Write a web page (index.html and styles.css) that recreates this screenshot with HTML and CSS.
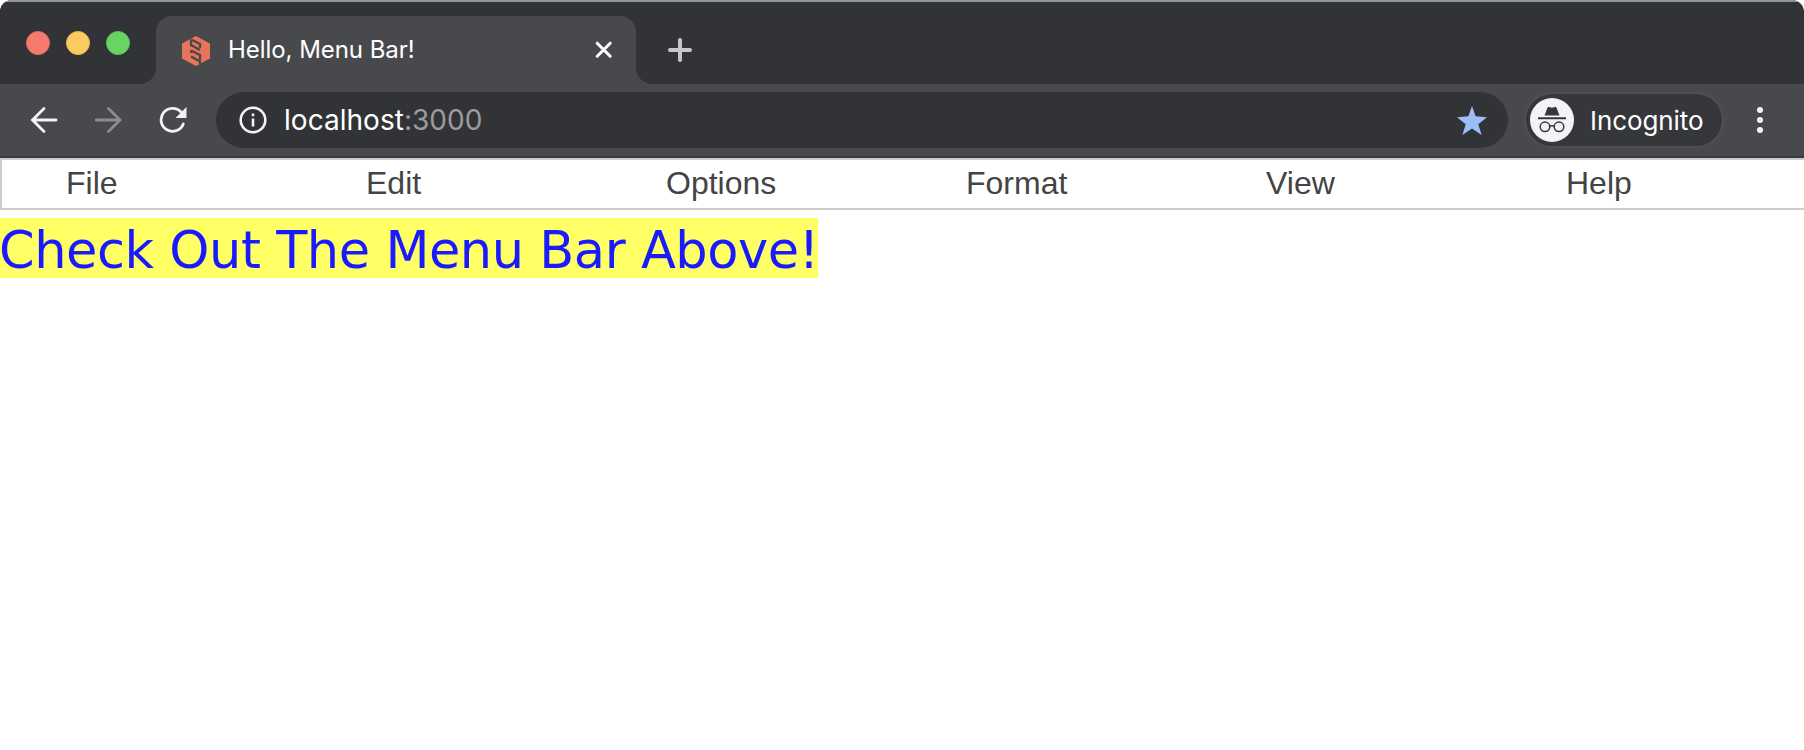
FILE: index.html
```html
<!DOCTYPE html>
<html lang="en">
<head>
<meta charset="utf-8">
<title>Hello, Menu Bar!</title>
<link rel="stylesheet" href="styles.css">
</head>
<body>
<div class="window">
  <header class="tabstrip">
    <div class="lights"><i class="light red"></i><i class="light yellow"></i><i class="light green"></i></div>
    <div class="tab">
      <svg class="favicon" width="28" height="30" viewBox="0 0 28 30">
        <path fill="#e8745b" d="M14 0 28 7.500V22.500L14 30 0 22.500V7.500Z"/>
        <path class="slots" d="M9 3.500 18 8V12M9 3.500V9L18 14M9 14.500 18 19V24M9 14.500V17M9 20.500 18 25.500V28"/>
      </svg>
      <span class="tab-title">Hello, Menu Bar!</span>
      <svg class="close" width="18" height="18" viewBox="0 0 18 18"><path d="M2.200 2.200 15.200 15.200M15.200 2.200 2.200 15.200"/></svg>
    </div>
    <svg class="plus" width="24" height="24" viewBox="0 0 24 24"><path d="M12 2V22M2 12H22"/></svg>
  </header>
  <nav class="toolbar">
    <svg class="nav back" width="28" height="28" viewBox="0 0 28 28"><path d="M26 14H3M14 2.500 2.500 14 14 25.500"/></svg>
    <svg class="nav forward" width="28" height="28" viewBox="0 0 28 28"><path d="M1 14H25M13.500 2.500 25 14 13.500 25.500"/></svg>
    <svg class="nav reload" width="28" height="28" viewBox="0 0 28 28"><path d="M24.300 18A11.500 11.500 0 1 1 22 6"/><path class="solid" d="M27.500 1V12H16.500Z"/></svg>
    <div class="address">
      <svg class="info" width="28" height="28" viewBox="0 0 28 28"><circle cx="14" cy="14" r="12.300"/><path d="M14 12.500V20.500M14 7.500V10.300"/></svg>
      <span class="url"><span class="host">localhost</span><span class="port">:3000</span></span>
      <svg class="star" width="30" height="29" viewBox="0 0 30 29"><path d="M15 0 18.600 10.300 30 11.200 21.300 18.200 24.600 29 15 22.600 5.400 29 8.700 18.200 0 11.200 11.400 10.300Z"/></svg>
    </div>
    <div class="chip">
      <svg class="avatar" width="44" height="44" viewBox="0 0 44 44">
        <circle cx="22" cy="22" r="22" fill="#f1f3f4"/>
        <path fill="#36373b" d="M14.500 17.500 17.600 9.500Q18 8.600 19 8.900L22 9.700 25 8.900Q26 8.600 26.400 9.500L29.500 17.500ZM8 19.200H36V21.200H8Z"/>
        <g fill="none" stroke="#36373b" stroke-width="1.500"><circle cx="15" cy="28.800" r="4.800"/><circle cx="29" cy="28.800" r="4.800"/><path d="M19.700 28.500Q22 27 24.300 28.500"/></g>
      </svg>
      <span class="chip-label">Incognito</span>
    </div>
    <svg class="more" width="6" height="26" viewBox="0 0 6 26"><circle cx="3" cy="3" r="3"/><circle cx="3" cy="13" r="3"/><circle cx="3" cy="23" r="3"/></svg>
  </nav>
  <main class="page">
    <ul class="menubar"><li>File</li><li>Edit</li><li>Options</li><li>Format</li><li>View</li><li>Help</li></ul>
    <div class="banner">Check Out The Menu Bar Above!</div>
  </main>
</div>
</body>
</html>
```
FILE: styles.css
```css
* { box-sizing: border-box; }
body { margin: 0; background: #fff; overflow: hidden; }
.window { height: 750px; border-radius: 12px 12px 0 0; overflow: hidden; background: #fff; }
svg { display: block; flex: none; }

.tabstrip { height: 84px; display: flex; background: #323337; border-top: 2px solid #919594; }
.lights { width: 156px; padding: 29px 0 0 26px; display: flex; gap: 16px; background: #323337; }
.light { width: 24px; height: 24px; border-radius: 50%; border: 1px solid; }
.red { background: #f57b70; border-color: #e76a5f; }
.yellow { background: #fbca60; border-color: #e9b850; }
.green { background: #69d366; border-color: #5bc458; }
.tab { width: 480px; height: 68px; margin-top: 14px; padding: 0 23px 0 26px; display: flex; align-items: center; background: #48494c; border-radius: 16px 16px 0 0; position: relative; }
.tab::before, .tab::after { content: ""; position: absolute; bottom: 0; width: 16px; height: 16px; }
.tab::before { left: -16px; background: radial-gradient(circle at 0 0, transparent 15.500px, #48494c 16px); }
.tab::after { right: -16px; background: radial-gradient(circle at 100% 0, transparent 15.500px, #48494c 16px); }
.favicon { margin-top: 1px; }
.slots { fill: none; stroke: #48494c; stroke-width: 2.300; }
.tab-title { margin-left: 18px; flex: 1; font: 430 24px/30px Inter, sans-serif; letter-spacing: -0.05px; color: #fff; white-space: nowrap; }
.close path { fill: none; stroke: #fff; stroke-width: 3; stroke-linecap: round; }
.plus { margin: 36px 0 0 32px; }
.plus path { stroke: #c5c7cb; stroke-width: 4; stroke-linecap: round; }

.toolbar { height: 74px; padding: 8px 41px 8px 30px; display: flex; align-items: flex-start; background: #48494c; border-bottom: 2px solid #39393b; }
.nav { margin-top: 13.500px; fill: none; stroke: #f1f3f4; stroke-width: 2.800; stroke-linecap: round; }
.forward { margin-left: 36.500px; stroke: #8c8d91; }
.reload { margin-left: 36px; }
.address { width: 1292px; height: 56px; margin-left: 29.500px; padding: 0 21px 0 22px; display: flex; align-items: center; background: #323337; border-radius: 28px; }
.solid { fill: #f1f3f4; stroke: none; }
.info { margin-left: 0.500px; fill: none; stroke: #f1f3f4; stroke-width: 2.600; }
.url { margin-left: 17.500px; flex: 1; font: 430 28px/36px Inter, sans-serif; letter-spacing: 0.030px; color: #fff; }
.port { color: #9b9c9e; }
.star { fill: #9dbdf8; }
.chip { width: 200px; height: 56px; margin-left: 16px; padding-left: 4px; display: flex; align-items: center; background: #36373b; border: 2px solid #4f5054; border-radius: 28px; }
.chip-label { margin-left: 16px; padding-top: 2px; font: 430 26px/36px Inter, sans-serif; letter-spacing: -0.080px; color: #fff; }
.more { margin: 15px 0 0 33px; fill: #f1f3f4; }

.menubar { height: 52px; margin: 0; padding: 0 0 0 64px; display: flex; list-style: none; border: 2px solid #ccc; border-right: 0; font: 32px/46px "Liberation Sans", Arial, sans-serif; color: #444; }
.menubar li { width: 300px; flex: none; }
.banner { width: 818px; height: 60px; margin-top: 8px; background: #ffff66; color: #1a1aff; font: 51px/66px "DejaVu Sans", Verdana, sans-serif; letter-spacing: -0.46px; text-indent: -1px; white-space: nowrap; }
```
